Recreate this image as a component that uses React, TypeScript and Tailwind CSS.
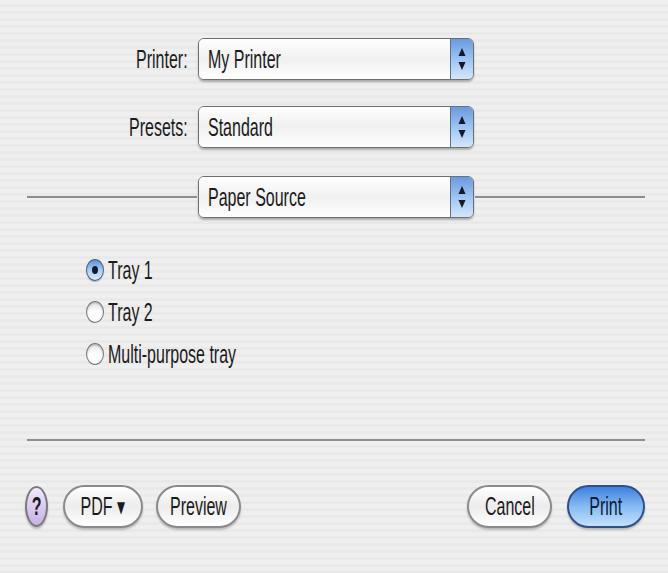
import React from 'react';

// narrow "squished" Aqua text
function T({ children, origin = 'origin-left', className = '' }: { children: React.ReactNode; origin?: string; className?: string }) {
  return <span className={`inline-block whitespace-nowrap scale-x-[0.64] ${origin} ${className}`}>{children}</span>;
}

function Arrows() {
  return (
    <svg width="8" height="24" viewBox="0 0 8 24">
      <path d="M4 1 L7.5 9 L0.5 9 Z" fill="#14182a" />
      <path d="M4 23 L7.5 15 L0.5 15 Z" fill="#14182a" />
    </svg>
  );
}

function Popup({ label }: { label: string }) {
  return (
    <div className="w-[276px] h-[42px] flex rounded-[6px] border border-[#6f6f6f] shadow-[0_2px_2px_rgba(0,0,0,0.28)] overflow-hidden">
      <div className="flex-1 flex items-center pl-[9px] bg-gradient-to-b from-white via-[#f0f0f0] to-white">
        <T>{label}</T>
      </div>
      <div className="w-[23px] flex items-center justify-center border-l border-[#5a6f92] bg-gradient-to-b from-[#6a9ade] via-[#9cc4f3] to-[#d3e7fb]">
        <Arrows />
      </div>
    </div>
  );
}

function Radio({ checked, label }: { checked?: boolean; label: string }) {
  return (
    <div className="h-[42px] flex items-center pl-[86px] gap-[4px]">
      {checked ? (
        <div className="w-[18px] h-[22px] rounded-[50%] border border-[#4a5f86] bg-gradient-to-b from-[#5c8fd8] via-[#a9cdf6] to-[#d9ebfd] flex items-center justify-center shadow-[0_1px_1px_rgba(0,0,0,0.25)]">
          <div className="w-[6px] h-[8px] rounded-[50%] bg-[#121a2c]" />
        </div>
      ) : (
        <div className="w-[18px] h-[22px] rounded-[50%] border border-[#777] bg-gradient-to-b from-[#e2e2e2] via-white to-white shadow-[inset_0_1px_2px_rgba(0,0,0,0.25)]" />
      )}
      <T>{label}</T>
    </div>
  );
}

function Btn({ children, w, blue = false }: { children: React.ReactNode; w: string; blue?: boolean }) {
  return (
    <div
      className={`${w} h-[43px] rounded-full flex items-center justify-center shadow-[0_2px_2px_rgba(0,0,0,0.22)] ${
        blue
          ? 'border-2 border-[#2f4f86] bg-gradient-to-b from-[#3f7fdc] via-[#86bbf3] to-[#c3e1fb] text-[#0c1a38]'
          : 'border-2 border-[#8a8a8a] bg-gradient-to-b from-white via-[#ececec] to-white'
      }`}
    >
      <T origin="origin-center">{children}</T>
    </div>
  );
}

export default function App() {
  return (
    <div className="w-[668px] h-[573px] font-['Liberation_Sans',Arial,sans-serif] text-[25px] leading-none text-[#1b1b1b] bg-[repeating-linear-gradient(180deg,#efefef_0px,#efefef_4px,#e9e9e9_4px,#e9e9e9_7px)] flex flex-col">
      {/* Printer / Presets */}
      <div className="flex items-center h-[42px] mt-[38px]">
        <div className="w-[188px] text-right"><T origin="origin-right">Printer:</T></div>
        <div className="ml-[10px]"><Popup label="My Printer" /></div>
      </div>
      <div className="flex items-center h-[42px] mt-[26px]">
        <div className="w-[188px] text-right"><T origin="origin-right">Presets:</T></div>
        <div className="ml-[10px]"><Popup label="Standard" /></div>
      </div>

      {/* Pane selector */}
      <div className="flex items-center h-[42px] mt-[28px] pl-[27px] pr-[23px]">
        <div className="w-[170px] h-[2px] bg-[#8e8e8e] mr-[1px]" />
        <Popup label="Paper Source" />
        <div className="flex-1 h-[2px] bg-[#8e8e8e] ml-[1px]" />
      </div>

      {/* Trays */}
      <div className="mt-[31px] flex flex-col">
        <Radio checked label="Tray 1" />
        <Radio label="Tray 2" />
        <Radio label="Multi-purpose tray" />
      </div>

      <div className="mt-[64px] ml-[27px] mr-[23px] h-[2px] bg-[#8e8e8e]" />

      {/* Buttons */}
      <div className="mt-[44px] flex items-center pl-[25px] pr-[23px]">
        <div className="w-[23px] h-[41px] rounded-[50%] border-2 border-[#7a7a7a] bg-gradient-to-b from-[#f1e8fb] via-[#dccbf1] to-[#c7b1e6] flex items-center justify-center shadow-[0_2px_2px_rgba(0,0,0,0.22)]">
          <T origin="origin-center" className="font-bold">?</T>
        </div>
        <div className="ml-[15px]"><Btn w="w-[80px]">PDF ▾</Btn></div>
        <div className="ml-[13px]"><Btn w="w-[85px]">Preview</Btn></div>
        <div className="flex-1" />
        <Btn w="w-[85px]">Cancel</Btn>
        <div className="ml-[15px]"><Btn w="w-[78px]" blue>Print</Btn></div>
      </div>
    </div>
  );
}
